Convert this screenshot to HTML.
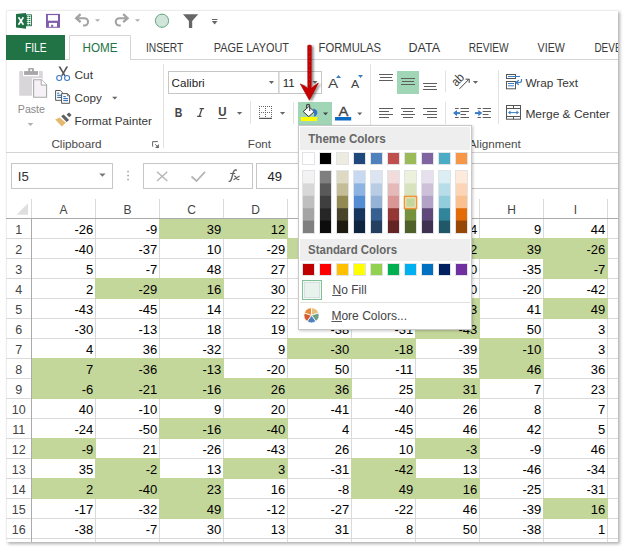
<!DOCTYPE html>
<html><head><meta charset="utf-8"><style>
html,body{margin:0;padding:0;background:#fff;}
body{width:629px;height:556px;position:relative;overflow:hidden;}
#frame{position:absolute;left:6px;top:10px;width:612px;height:532px;background:#fff;box-shadow:2px 2px 3px rgba(0,0,0,0.3);}
svg{position:absolute;left:0;top:0;}
text{font-family:"Liberation Sans",sans-serif;}
</style></head><body>
<div id="frame"></div>
<svg width="629" height="556" viewBox="0 0 629 556">
<defs>
<clipPath id="fc"><rect x="6" y="10" width="612" height="532"/></clipPath>
<filter id="psh" x="-10%" y="-10%" width="130%" height="130%"><feGaussianBlur in="SourceAlpha" stdDeviation="1.6"/><feOffset dx="0.5" dy="1"/><feComponentTransfer><feFuncA type="linear" slope="0.22"/></feComponentTransfer><feMerge><feMergeNode/><feMergeNode in="SourceGraphic"/></feMerge></filter>
<filter id="ash" x="-50%" y="-10%" width="200%" height="130%"><feGaussianBlur in="SourceAlpha" stdDeviation="1.2"/><feOffset dx="1.5" dy="1"/><feComponentTransfer><feFuncA type="linear" slope="0.45"/></feComponentTransfer><feMerge><feMergeNode/><feMergeNode in="SourceGraphic"/></feMerge></filter>
</defs>
<g clip-path="url(#fc)">
<line x1="6" y1="10.5" x2="618" y2="10.5" stroke="#ededed" stroke-width="1"/>
<line x1="6.5" y1="10" x2="6.5" y2="542" stroke="#ededed" stroke-width="1"/>
<path d="M16 14L26 12.9V28.7L16 27.5Z" fill="#1e7145"/>
<rect x="26" y="14.4" width="5.9" height="11.8" fill="#1e7145"/>
<rect x="26.9" y="15.3" width="4.1" height="10" fill="#fff"/>
<line x1="26.4" y1="16.6" x2="27.7" y2="16.6" stroke="#1e7145" stroke-width="1.1"/>
<line x1="28.6" y1="16.6" x2="30.4" y2="16.6" stroke="#1e7145" stroke-width="1.2"/>
<line x1="26.4" y1="18.6" x2="27.7" y2="18.6" stroke="#1e7145" stroke-width="1.1"/>
<line x1="28.6" y1="18.6" x2="30.4" y2="18.6" stroke="#1e7145" stroke-width="1.2"/>
<line x1="26.4" y1="20.6" x2="27.7" y2="20.6" stroke="#1e7145" stroke-width="1.1"/>
<line x1="28.6" y1="20.6" x2="30.4" y2="20.6" stroke="#1e7145" stroke-width="1.2"/>
<line x1="26.4" y1="22.6" x2="27.7" y2="22.6" stroke="#1e7145" stroke-width="1.1"/>
<line x1="28.6" y1="22.6" x2="30.4" y2="22.6" stroke="#1e7145" stroke-width="1.2"/>
<line x1="26.4" y1="24.6" x2="27.7" y2="24.6" stroke="#1e7145" stroke-width="1.1"/>
<line x1="28.6" y1="24.6" x2="30.4" y2="24.6" stroke="#1e7145" stroke-width="1.2"/>
<path d="M18.5 17.3L23.4 24.7M23.4 17.3L18.5 24.7" fill="none" stroke="#fff" stroke-width="1.6"/>
<rect x="46" y="13.9" width="14" height="13.9" fill="#7f5bab"/>
<rect x="47.9" y="15.1" width="10.1" height="5.6" fill="#fff"/>
<rect x="48.9" y="22.9" width="8.1" height="3.9" fill="#fff"/>
<rect x="51.1" y="24.8" width="2.1" height="2" fill="#7f5bab"/>
<path d="M76.5 18.2H84.4A3.65 3.65 0 0 1 84.4 25.5H83" fill="none" stroke="#a3a3a3" stroke-width="2.1"/>
<path d="M80.6 14.2L76.2 18.2L80.6 22.2" fill="none" stroke="#a3a3a3" stroke-width="2.3"/>
<path d="M95 19.3H100L97.5 21.8Z" fill="#a8a8a8"/>
<path d="M127.3 18.2H119.4A3.65 3.65 0 0 0 119.4 25.5H120.8" fill="none" stroke="#a3a3a3" stroke-width="2.1"/>
<path d="M123.2 14.2L127.6 18.2L123.2 22.2" fill="none" stroke="#a3a3a3" stroke-width="2.3"/>
<path d="M135 19.3H140L137.5 21.8Z" fill="#a8a8a8"/>
<circle cx="162" cy="20.7" r="6.6" fill="#d2e5da" stroke="#5ea882" stroke-width="1"/>
<path d="M183 14.2H198.2L192.2 21V28.1H188.9V21Z" fill="#666"/>
<line x1="211.8" y1="19.5" x2="217.5" y2="19.5" stroke="#666" stroke-width="1"/>
<path d="M211.8 21H217.5L214.65 24.5Z" fill="#666"/>
<rect x="6" y="35" width="59" height="25" fill="#217346"/>
<line x1="65" y1="59.5" x2="69" y2="59.5" stroke="#d4d4d4" stroke-width="1"/>
<line x1="130" y1="59.5" x2="618" y2="59.5" stroke="#d4d4d4" stroke-width="1"/>
<path d="M69.5 60V35.5H130.5V60" fill="none" stroke="#d4d4d4" stroke-width="1"/>
<text x="24.9" y="52" font-size="12.5" fill="#fff" textLength="21.6" lengthAdjust="spacingAndGlyphs">FILE</text>
<text x="82.5" y="52" font-size="12.5" fill="#217346" textLength="34.9" lengthAdjust="spacingAndGlyphs">HOME</text>
<text x="145.9" y="52" font-size="12.5" fill="#3a3a3a" textLength="37.4" lengthAdjust="spacingAndGlyphs">INSERT</text>
<text x="213.8" y="52" font-size="12.5" fill="#3a3a3a" textLength="75.1" lengthAdjust="spacingAndGlyphs">PAGE LAYOUT</text>
<text x="318.6" y="52" font-size="12.5" fill="#3a3a3a" textLength="62.5" lengthAdjust="spacingAndGlyphs">FORMULAS</text>
<text x="408.5" y="52" font-size="12.5" fill="#3a3a3a" textLength="31.6" lengthAdjust="spacingAndGlyphs">DATA</text>
<text x="468.7" y="52" font-size="12.5" fill="#3a3a3a" textLength="40" lengthAdjust="spacingAndGlyphs">REVIEW</text>
<text x="537.6" y="52" font-size="12.5" fill="#3a3a3a" textLength="27.2" lengthAdjust="spacingAndGlyphs">VIEW</text>
<text x="594.4" y="52" font-size="12.5" fill="#3a3a3a" textLength="61" lengthAdjust="spacingAndGlyphs">DEVELOPER</text>
<line x1="6" y1="152.5" x2="618" y2="152.5" stroke="#d4d4d4" stroke-width="1"/>
<line x1="163.5" y1="64" x2="163.5" y2="148" stroke="#e1e1e1" stroke-width="1"/>
<line x1="370.5" y1="64" x2="370.5" y2="148" stroke="#e1e1e1" stroke-width="1"/>
<rect x="19.2" y="71.1" width="23.6" height="24.6" fill="#d9d6da" rx="0.8"/>
<rect x="23" y="70" width="16" height="6.2" fill="#fff"/>
<rect x="24.1" y="71.1" width="13.9" height="3.8" fill="#a7a7a7"/>
<rect x="28.2" y="68" width="5.7" height="4" fill="#a7a7a7" rx="1"/>
<rect x="30.1" y="69.4" width="1.9" height="1.7" fill="#fff"/>
<path d="M32.1 78.2H41.6L48.1 84.7V98.7H32.1Z" fill="#fff"/>
<path d="M33.6 79.7H41.2L46.6 85.1V97.2H33.6Z" fill="#f6f1f7" stroke="#a9a9a9" stroke-width="1.1"/>
<path d="M41.2 79.7V85.1H46.6" fill="#fff" stroke="#a9a9a9" stroke-width="1"/>
<text x="17.8" y="112.6" font-size="11.6" fill="#8a8a8a" textLength="27.2" lengthAdjust="spacingAndGlyphs">Paste</text>
<path d="M27.6 123H33.3L30.45 126Z" fill="#b0b0b0"/>
<path d="M58.4 66.6L60.4 66.6L65.6 75.4L64.4 76.2Z M66.2 66.6L68.2 66.6L62.4 76.2L61.2 75.4Z" fill="#555"/>
<circle cx="59.2" cy="78" r="2.5" fill="none" stroke="#3d7bc8" stroke-width="1.1"/>
<circle cx="67.1" cy="78" r="2.5" fill="none" stroke="#3d7bc8" stroke-width="1.1"/>
<text x="74.5" y="78.7" font-size="11.6" fill="#363636" textLength="18.5" lengthAdjust="spacingAndGlyphs">Cut</text>
<path d="M55.6 90.5H60.3L62.3 92.5V100.3H55.6Z" fill="#fff" stroke="#555" stroke-width="1"/>
<line x1="57.2" y1="93.2" x2="59.2" y2="93.2" stroke="#2e6db8" stroke-width="1.1"/>
<line x1="57.2" y1="95.3" x2="61" y2="95.3" stroke="#2e6db8" stroke-width="1.1"/>
<line x1="57.2" y1="97.4" x2="61" y2="97.4" stroke="#2e6db8" stroke-width="1.1"/>
<path d="M61.6 93.6H67.4L69.6 95.8V103.3H61.6Z" fill="#fff" stroke="#555" stroke-width="1"/>
<path d="M67.4 93.6V95.8H69.6" fill="none" stroke="#555" stroke-width="0.8"/>
<line x1="63.3" y1="96.6" x2="65.8" y2="96.6" stroke="#2e6db8" stroke-width="1.1"/>
<line x1="63.3" y1="98.6" x2="68" y2="98.6" stroke="#2e6db8" stroke-width="1.1"/>
<line x1="63.3" y1="100.6" x2="68" y2="100.6" stroke="#2e6db8" stroke-width="1.1"/>
<text x="74.5" y="101.7" font-size="11.6" fill="#363636" textLength="27.3" lengthAdjust="spacingAndGlyphs">Copy</text>
<path d="M112.1 96.7H117.4L114.75 99.4Z" fill="#666"/>
<path d="M66.6 114.6L69 112.4L71.6 115L69.3 117.3Z" fill="#5f5f5f"/>
<path d="M61.2 116.3L63.6 114.4L69.1 119.9L66.6 122Z" fill="#5f5f5f"/>
<path d="M55.2 119.5L59.6 117.6L65.9 122.8L61.8 126.5Z" fill="#e6b86f"/>
<text x="74.5" y="124.8" font-size="11.6" fill="#363636" textLength="77.4" lengthAdjust="spacingAndGlyphs">Format Painter</text>
<text x="51.4" y="148.2" font-size="11.6" fill="#4a4a4a" textLength="50.2" lengthAdjust="spacingAndGlyphs">Clipboard</text>
<path d="M152.6 146.6V141.6H157.9" fill="none" stroke="#666" stroke-width="1"/>
<path d="M158.9 144.1V147.9H155.1Z" fill="#666"/>
<path d="M155.2 144.3L157.6 146.7" fill="none" stroke="#666" stroke-width="1"/>
<rect x="168.5" y="71.5" width="110.5" height="22" fill="#fff" stroke="#c6c6c6" stroke-width="1"/>
<rect x="279" y="71.5" width="42.5" height="22" fill="#fff" stroke="#c6c6c6" stroke-width="1"/>
<text x="171.6" y="86.6" font-size="11.6" fill="#222" textLength="33" lengthAdjust="spacingAndGlyphs">Calibri</text>
<path d="M268.9 80.9H274L271.45 84.1Z" fill="#666"/>
<text x="282.8" y="86.6" font-size="11.6" fill="#222" textLength="12" lengthAdjust="spacingAndGlyphs">11</text>
<path d="M312.5 81H317.5L315.0 84Z" fill="#666"/>
<text x="328" y="87.6" font-size="13" fill="#444" textLength="10.2" lengthAdjust="spacingAndGlyphs">A</text>
<path d="M336 77.9H341.1L338.55 75Z" fill="#3b7dc4"/>
<text x="351.1" y="87.6" font-size="10.8" fill="#444" textLength="8.2" lengthAdjust="spacingAndGlyphs">A</text>
<path d="M358 75H363L360.5 78Z" fill="#3b7dc4"/>
<text x="174.8" y="117" font-size="12.3" fill="#444" textLength="7.6" lengthAdjust="spacingAndGlyphs" font-weight="bold">B</text>
<path d="M199.6 108.7H204.1M201.9 108.7L199.3 116.4M197.1 116.4H201.5" fill="none" stroke="#4a4a4a" stroke-width="1.3"/>
<text x="218.3" y="116.4" font-size="12" fill="#444" textLength="8.3" lengthAdjust="spacingAndGlyphs" font-weight="bold">U</text>
<line x1="218.3" y1="118.5" x2="226.7" y2="118.5" stroke="#555" stroke-width="1"/>
<path d="M236.9 112H242.2L239.55 114.8Z" fill="#666"/>
<line x1="250.5" y1="101" x2="250.5" y2="123.5" stroke="#e1e1e1" stroke-width="1"/>
<rect x="259" y="106" width="1" height="1" fill="#666"/>
<rect x="259" y="112" width="1" height="1" fill="#666"/>
<rect x="261" y="106" width="1" height="1" fill="#666"/>
<rect x="261" y="112" width="1" height="1" fill="#666"/>
<rect x="263" y="106" width="1" height="1" fill="#666"/>
<rect x="263" y="112" width="1" height="1" fill="#666"/>
<rect x="265" y="106" width="1" height="1" fill="#666"/>
<rect x="265" y="112" width="1" height="1" fill="#666"/>
<rect x="267" y="106" width="1" height="1" fill="#666"/>
<rect x="267" y="112" width="1" height="1" fill="#666"/>
<rect x="269" y="106" width="1" height="1" fill="#666"/>
<rect x="269" y="112" width="1" height="1" fill="#666"/>
<rect x="271" y="106" width="1" height="1" fill="#666"/>
<rect x="271" y="112" width="1" height="1" fill="#666"/>
<rect x="259" y="108" width="1" height="1" fill="#666"/>
<rect x="259" y="110" width="1" height="1" fill="#666"/>
<rect x="259" y="114" width="1" height="1" fill="#666"/>
<rect x="259" y="116" width="1" height="1" fill="#666"/>
<rect x="265" y="108" width="1" height="1" fill="#666"/>
<rect x="265" y="110" width="1" height="1" fill="#666"/>
<rect x="265" y="114" width="1" height="1" fill="#666"/>
<rect x="265" y="116" width="1" height="1" fill="#666"/>
<rect x="271" y="108" width="1" height="1" fill="#666"/>
<rect x="271" y="110" width="1" height="1" fill="#666"/>
<rect x="271" y="114" width="1" height="1" fill="#666"/>
<rect x="271" y="116" width="1" height="1" fill="#666"/>
<rect x="259" y="117.8" width="13" height="1.2" fill="#555"/>
<path d="M279.9 112H285.2L282.54999999999995 114.8Z" fill="#666"/>
<line x1="293.5" y1="102" x2="293.5" y2="124" stroke="#e1e1e1" stroke-width="1"/>
<rect x="298" y="102" width="34" height="23" fill="#a0d5b6"/>
<path d="M303.2 111.6L308.75 106.6L314.3 111.6L308.75 116.6Z" fill="#fff" stroke="#333" stroke-width="1"/>
<path d="M306.5 108.5V106A1.6 1.6 0 0 1 309.7 106V111" fill="none" stroke="#444" stroke-width="1.1"/>
<path d="M313.2 108.6Q318 109.6 317.2 113.8Q316.5 116.4 313.8 116.8Q315 113.2 313 111.4Z" fill="#3b74c6"/>
<rect x="300.8" y="117" width="16.3" height="4" fill="#ffff00"/>
<path d="M323 112.6H328.1L325.55 115.2Z" fill="#444"/>
<text x="338.4" y="116.3" font-size="12.8" fill="#444" textLength="9.9" lengthAdjust="spacingAndGlyphs" stroke="#444" stroke-width="0.35">A</text>
<rect x="335" y="117" width="16.2" height="3.5" fill="#0a6ac4"/>
<path d="M357.2 112.6H362.3L359.75 115.2Z" fill="#666"/>
<text x="247.8" y="148" font-size="11.6" fill="#4a4a4a" textLength="23.2" lengthAdjust="spacingAndGlyphs">Font</text>
<line x1="379" y1="74.5" x2="393" y2="74.5" stroke="#5e5e5e" stroke-width="1"/>
<line x1="380" y1="77.5" x2="392" y2="77.5" stroke="#5e5e5e" stroke-width="1"/>
<line x1="379" y1="80.5" x2="393" y2="80.5" stroke="#5e5e5e" stroke-width="1"/>
<rect x="397" y="71" width="22" height="23" fill="#a0d5b6"/>
<line x1="401" y1="78.5" x2="415" y2="78.5" stroke="#5e5e5e" stroke-width="1"/>
<line x1="402" y1="81.5" x2="414" y2="81.5" stroke="#5e5e5e" stroke-width="1"/>
<line x1="401" y1="84.5" x2="415" y2="84.5" stroke="#5e5e5e" stroke-width="1"/>
<line x1="423" y1="83.5" x2="437" y2="83.5" stroke="#5e5e5e" stroke-width="1"/>
<line x1="424" y1="86.5" x2="436" y2="86.5" stroke="#5e5e5e" stroke-width="1"/>
<line x1="423" y1="89.5" x2="437" y2="89.5" stroke="#5e5e5e" stroke-width="1"/>
<line x1="445.5" y1="70.7" x2="445.5" y2="92.5" stroke="#e1e1e1" stroke-width="1"/>
<text x="451.8" y="83.6" font-size="12.5" fill="#3a3a3a" textLength="12.5" lengthAdjust="spacingAndGlyphs" transform="rotate(-45 458 80)">ab</text>
<path d="M459.5 88.8L469 79.2" fill="none" stroke="#444" stroke-width="1"/>
<path d="M465.5 79.2H469.2V82.9" fill="none" stroke="#444" stroke-width="1"/>
<path d="M472.8 80.9H478.2L475.5 83.8Z" fill="#666"/>
<line x1="379" y1="108.5" x2="393" y2="108.5" stroke="#5e5e5e" stroke-width="1"/>
<line x1="379" y1="111.5" x2="389" y2="111.5" stroke="#5e5e5e" stroke-width="1"/>
<line x1="379" y1="114.5" x2="393" y2="114.5" stroke="#5e5e5e" stroke-width="1"/>
<line x1="379" y1="117.5" x2="389" y2="117.5" stroke="#5e5e5e" stroke-width="1"/>
<line x1="401" y1="108.5" x2="415" y2="108.5" stroke="#5e5e5e" stroke-width="1"/>
<line x1="403" y1="111.5" x2="413" y2="111.5" stroke="#5e5e5e" stroke-width="1"/>
<line x1="401" y1="114.5" x2="415" y2="114.5" stroke="#5e5e5e" stroke-width="1"/>
<line x1="403" y1="117.5" x2="413" y2="117.5" stroke="#5e5e5e" stroke-width="1"/>
<line x1="423" y1="108.5" x2="437" y2="108.5" stroke="#5e5e5e" stroke-width="1"/>
<line x1="427" y1="111.5" x2="437" y2="111.5" stroke="#5e5e5e" stroke-width="1"/>
<line x1="423" y1="114.5" x2="437" y2="114.5" stroke="#5e5e5e" stroke-width="1"/>
<line x1="427" y1="117.5" x2="437" y2="117.5" stroke="#5e5e5e" stroke-width="1"/>
<line x1="445.5" y1="101.8" x2="445.5" y2="124.4" stroke="#e1e1e1" stroke-width="1"/>
<line x1="455" y1="108.5" x2="458.7" y2="108.5" stroke="#5e5e5e" stroke-width="1"/>
<line x1="460.5" y1="108.5" x2="469" y2="108.5" stroke="#5e5e5e" stroke-width="1"/>
<line x1="460.5" y1="111.5" x2="469" y2="111.5" stroke="#5e5e5e" stroke-width="1"/>
<line x1="460.5" y1="114.5" x2="466" y2="114.5" stroke="#5e5e5e" stroke-width="1"/>
<line x1="455" y1="117.5" x2="458.7" y2="117.5" stroke="#5e5e5e" stroke-width="1"/>
<line x1="460.5" y1="117.5" x2="469" y2="117.5" stroke="#5e5e5e" stroke-width="1"/>
<path d="M453 113.1L457 110V116.2Z" fill="#3b7dc4"/>
<path d="M456 113.1H460.2" fill="none" stroke="#3b7dc4" stroke-width="2"/>
<line x1="477.5" y1="108.5" x2="481" y2="108.5" stroke="#5e5e5e" stroke-width="1"/>
<line x1="482.7" y1="108.5" x2="491" y2="108.5" stroke="#5e5e5e" stroke-width="1"/>
<line x1="482.7" y1="111.5" x2="491" y2="111.5" stroke="#5e5e5e" stroke-width="1"/>
<line x1="482.7" y1="114.5" x2="488.5" y2="114.5" stroke="#5e5e5e" stroke-width="1"/>
<line x1="477.5" y1="117.5" x2="481" y2="117.5" stroke="#5e5e5e" stroke-width="1"/>
<line x1="482.7" y1="117.5" x2="491" y2="117.5" stroke="#5e5e5e" stroke-width="1"/>
<path d="M482.3 113.1L478.3 110V116.2Z" fill="#3b7dc4"/>
<path d="M474.9 113.1H479.3" fill="none" stroke="#3b7dc4" stroke-width="2"/>
<line x1="498.5" y1="70" x2="498.5" y2="124" stroke="#e1e1e1" stroke-width="1"/>
<rect x="506.5" y="74.5" width="9" height="4" fill="#fff" stroke="#555" stroke-width="1"/>
<line x1="508" y1="76.5" x2="520" y2="76.5" stroke="#3b7dc4" stroke-width="1"/>
<rect x="506.5" y="81.5" width="9" height="7.3" fill="#fff" stroke="#555" stroke-width="1"/>
<line x1="508" y1="83.5" x2="514" y2="83.5" stroke="#3b7dc4" stroke-width="1"/>
<line x1="508" y1="85.8" x2="514" y2="85.8" stroke="#3b7dc4" stroke-width="1"/>
<path d="M521.5 79V80.4Q521.5 82.5 519 82.5H516.2" fill="none" stroke="#3b7dc4" stroke-width="1.2"/>
<path d="M518.8 80.2L516 82.5L518.8 84.7" fill="none" stroke="#3b7dc4" stroke-width="1.3"/>
<text x="525.4" y="87" font-size="11.6" fill="#363636" textLength="52.6" lengthAdjust="spacingAndGlyphs">Wrap Text</text>
<rect x="506.5" y="105.5" width="14" height="13.7" fill="#fff" stroke="#555" stroke-width="1"/>
<line x1="506.5" y1="108.5" x2="520.5" y2="108.5" stroke="#555" stroke-width="1"/>
<line x1="506.5" y1="116.5" x2="520.5" y2="116.5" stroke="#555" stroke-width="1"/>
<line x1="513.5" y1="105.5" x2="513.5" y2="108.5" stroke="#555" stroke-width="1"/>
<line x1="513.5" y1="116.5" x2="513.5" y2="119.2" stroke="#555" stroke-width="1"/>
<path d="M509.5 112.6H517.5" fill="none" stroke="#3b7dc4" stroke-width="1"/>
<path d="M508 112.6L510.5 110.6V114.6Z M519 112.6L516.5 110.6V114.6Z" fill="#3b7dc4"/>
<text x="525.4" y="117.9" font-size="11.6" fill="#363636" textLength="84.4" lengthAdjust="spacingAndGlyphs">Merge &amp; Center</text>
<text x="468.8" y="148" font-size="11.6" fill="#4a4a4a" textLength="52" lengthAdjust="spacingAndGlyphs">Alignment</text>
<rect x="11.5" y="163.5" width="101" height="25" fill="#fff" stroke="#c6c6c6" stroke-width="1"/>
<text x="17.8" y="180.6" font-size="12.5" fill="#333" textLength="11" lengthAdjust="spacingAndGlyphs">I5</text>
<path d="M99.2 173.5H105.6L102.4 176.8Z" fill="#777"/>
<rect x="127.3" y="170.8" width="1.5" height="1.5" fill="#999"/>
<rect x="127.3" y="174.8" width="1.5" height="1.5" fill="#999"/>
<rect x="127.3" y="178.8" width="1.5" height="1.5" fill="#999"/>
<rect x="143.5" y="163.5" width="109" height="25" fill="#fff" stroke="#c6c6c6" stroke-width="1"/>
<path d="M157 171.8L167.3 181M167.3 171.8L157 181" fill="none" stroke="#b5b5b5" stroke-width="1.4"/>
<path d="M191.5 176.5L196.5 181L205 171.8" fill="none" stroke="#b5b5b5" stroke-width="1.8"/>
<path d="M228.6 181.2Q230.6 182 231.6 178.5L233.4 172Q234.3 169.6 236.9 170.2" fill="none" stroke="#666" stroke-width="1.4"/>
<path d="M230.2 173.5H235.3" fill="none" stroke="#666" stroke-width="1.1"/>
<path d="M234 176.2Q235.3 175.6 236 177.3L236.8 179Q237.6 180 239.3 179.3M239.6 176L233.5 179.8" fill="none" stroke="#666" stroke-width="1.2"/>
<rect x="256.5" y="163.5" width="362" height="25" fill="#fff" stroke="#c6c6c6" stroke-width="1"/>
<text x="267.5" y="181" font-size="12.5" fill="#222" textLength="14.5" lengthAdjust="spacingAndGlyphs">49</text>
<line x1="6" y1="238.5" x2="618" y2="238.5" stroke="#dadada" stroke-width="1"/>
<line x1="6" y1="258.5" x2="618" y2="258.5" stroke="#dadada" stroke-width="1"/>
<line x1="6" y1="278.5" x2="618" y2="278.5" stroke="#dadada" stroke-width="1"/>
<line x1="6" y1="298.5" x2="618" y2="298.5" stroke="#dadada" stroke-width="1"/>
<line x1="6" y1="318.5" x2="618" y2="318.5" stroke="#dadada" stroke-width="1"/>
<line x1="6" y1="338.5" x2="618" y2="338.5" stroke="#dadada" stroke-width="1"/>
<line x1="6" y1="358.5" x2="618" y2="358.5" stroke="#dadada" stroke-width="1"/>
<line x1="6" y1="378.5" x2="618" y2="378.5" stroke="#dadada" stroke-width="1"/>
<line x1="6" y1="398.5" x2="618" y2="398.5" stroke="#dadada" stroke-width="1"/>
<line x1="6" y1="418.5" x2="618" y2="418.5" stroke="#dadada" stroke-width="1"/>
<line x1="6" y1="438.5" x2="618" y2="438.5" stroke="#dadada" stroke-width="1"/>
<line x1="6" y1="458.5" x2="618" y2="458.5" stroke="#dadada" stroke-width="1"/>
<line x1="6" y1="478.5" x2="618" y2="478.5" stroke="#dadada" stroke-width="1"/>
<line x1="6" y1="498.5" x2="618" y2="498.5" stroke="#dadada" stroke-width="1"/>
<line x1="6" y1="518.5" x2="618" y2="518.5" stroke="#dadada" stroke-width="1"/>
<line x1="6" y1="538.5" x2="618" y2="538.5" stroke="#dadada" stroke-width="1"/>
<line x1="6" y1="558.5" x2="618" y2="558.5" stroke="#dadada" stroke-width="1"/>
<line x1="95.5" y1="199" x2="95.5" y2="542" stroke="#dadada" stroke-width="1"/>
<line x1="159.5" y1="199" x2="159.5" y2="542" stroke="#dadada" stroke-width="1"/>
<line x1="223.5" y1="199" x2="223.5" y2="542" stroke="#dadada" stroke-width="1"/>
<line x1="287.5" y1="199" x2="287.5" y2="542" stroke="#dadada" stroke-width="1"/>
<line x1="351.5" y1="199" x2="351.5" y2="542" stroke="#dadada" stroke-width="1"/>
<line x1="415.5" y1="199" x2="415.5" y2="542" stroke="#dadada" stroke-width="1"/>
<line x1="479.5" y1="199" x2="479.5" y2="542" stroke="#dadada" stroke-width="1"/>
<line x1="543.5" y1="199" x2="543.5" y2="542" stroke="#dadada" stroke-width="1"/>
<line x1="607.5" y1="199" x2="607.5" y2="542" stroke="#dadada" stroke-width="1"/>
<rect x="159" y="218" width="65" height="21" fill="#c4d79b"/>
<rect x="223" y="218" width="65" height="21" fill="#c4d79b"/>
<rect x="287" y="238" width="65" height="21" fill="#c4d79b"/>
<rect x="415" y="238" width="65" height="21" fill="#c4d79b"/>
<rect x="479" y="238" width="65" height="21" fill="#c4d79b"/>
<rect x="543" y="238" width="65" height="21" fill="#c4d79b"/>
<rect x="543" y="258" width="65" height="21" fill="#c4d79b"/>
<rect x="95" y="278" width="65" height="21" fill="#c4d79b"/>
<rect x="159" y="278" width="65" height="21" fill="#c4d79b"/>
<rect x="415" y="298" width="65" height="21" fill="#c4d79b"/>
<rect x="543" y="298" width="65" height="21" fill="#c4d79b"/>
<rect x="415" y="318" width="65" height="21" fill="#c4d79b"/>
<rect x="287" y="338" width="65" height="21" fill="#c4d79b"/>
<rect x="351" y="338" width="65" height="21" fill="#c4d79b"/>
<rect x="479" y="338" width="65" height="21" fill="#c4d79b"/>
<rect x="32" y="358" width="64" height="21" fill="#c4d79b"/>
<rect x="95" y="358" width="65" height="21" fill="#c4d79b"/>
<rect x="159" y="358" width="65" height="21" fill="#c4d79b"/>
<rect x="479" y="358" width="65" height="21" fill="#c4d79b"/>
<rect x="32" y="378" width="64" height="21" fill="#c4d79b"/>
<rect x="95" y="378" width="65" height="21" fill="#c4d79b"/>
<rect x="159" y="378" width="65" height="21" fill="#c4d79b"/>
<rect x="223" y="378" width="65" height="21" fill="#c4d79b"/>
<rect x="287" y="378" width="65" height="21" fill="#c4d79b"/>
<rect x="415" y="378" width="65" height="21" fill="#c4d79b"/>
<rect x="159" y="418" width="65" height="21" fill="#c4d79b"/>
<rect x="223" y="418" width="65" height="21" fill="#c4d79b"/>
<rect x="32" y="438" width="64" height="21" fill="#c4d79b"/>
<rect x="415" y="438" width="65" height="21" fill="#c4d79b"/>
<rect x="95" y="458" width="65" height="21" fill="#c4d79b"/>
<rect x="223" y="458" width="65" height="21" fill="#c4d79b"/>
<rect x="351" y="458" width="65" height="21" fill="#c4d79b"/>
<rect x="32" y="478" width="64" height="21" fill="#c4d79b"/>
<rect x="95" y="478" width="65" height="21" fill="#c4d79b"/>
<rect x="159" y="478" width="65" height="21" fill="#c4d79b"/>
<rect x="351" y="478" width="65" height="21" fill="#c4d79b"/>
<rect x="415" y="478" width="65" height="21" fill="#c4d79b"/>
<rect x="159" y="498" width="65" height="21" fill="#c4d79b"/>
<rect x="543" y="498" width="65" height="21" fill="#c4d79b"/>
<line x1="6" y1="218.5" x2="618" y2="218.5" stroke="#ababab" stroke-width="1"/>
<line x1="31.5" y1="199" x2="31.5" y2="218" stroke="#dadada" stroke-width="1"/>
<line x1="31.5" y1="218" x2="31.5" y2="542" stroke="#ababab" stroke-width="1"/>
<path d="M28 203.3V214.7H16.5Z" fill="#dfdfdf"/>
<text x="63.5" y="214.1" font-size="12" fill="#444" text-anchor="middle">A</text>
<text x="127.5" y="214.1" font-size="12" fill="#444" text-anchor="middle">B</text>
<text x="191.5" y="214.1" font-size="12" fill="#444" text-anchor="middle">C</text>
<text x="255.5" y="214.1" font-size="12" fill="#444" text-anchor="middle">D</text>
<text x="319.5" y="214.1" font-size="12" fill="#444" text-anchor="middle">E</text>
<text x="383.5" y="214.1" font-size="12" fill="#444" text-anchor="middle">F</text>
<text x="447.5" y="214.1" font-size="12" fill="#444" text-anchor="middle">G</text>
<text x="511.5" y="214.1" font-size="12" fill="#444" text-anchor="middle">H</text>
<text x="575.5" y="214.1" font-size="12" fill="#444" text-anchor="middle">I</text>
<text x="18.8" y="233.8" font-size="12.5" fill="#444" text-anchor="middle">1</text>
<text x="93.2" y="234" font-size="13" fill="#000" text-anchor="end">-26</text>
<text x="157.2" y="234" font-size="13" fill="#000" text-anchor="end">-9</text>
<text x="221.2" y="234" font-size="13" fill="#000" text-anchor="end">39</text>
<text x="285.2" y="234" font-size="13" fill="#000" text-anchor="end">12</text>
<text x="477.2" y="234" font-size="13" fill="#000" text-anchor="end">4</text>
<text x="541.2" y="234" font-size="13" fill="#000" text-anchor="end">9</text>
<text x="605.2" y="234" font-size="13" fill="#000" text-anchor="end">44</text>
<text x="18.8" y="253.8" font-size="12.5" fill="#444" text-anchor="middle">2</text>
<text x="93.2" y="254" font-size="13" fill="#000" text-anchor="end">-40</text>
<text x="157.2" y="254" font-size="13" fill="#000" text-anchor="end">-37</text>
<text x="221.2" y="254" font-size="13" fill="#000" text-anchor="end">10</text>
<text x="285.2" y="254" font-size="13" fill="#000" text-anchor="end">-29</text>
<text x="477.2" y="254" font-size="13" fill="#000" text-anchor="end">2</text>
<text x="541.2" y="254" font-size="13" fill="#000" text-anchor="end">39</text>
<text x="605.2" y="254" font-size="13" fill="#000" text-anchor="end">-26</text>
<text x="18.8" y="273.8" font-size="12.5" fill="#444" text-anchor="middle">3</text>
<text x="93.2" y="274" font-size="13" fill="#000" text-anchor="end">5</text>
<text x="157.2" y="274" font-size="13" fill="#000" text-anchor="end">-7</text>
<text x="221.2" y="274" font-size="13" fill="#000" text-anchor="end">48</text>
<text x="285.2" y="274" font-size="13" fill="#000" text-anchor="end">27</text>
<text x="477.2" y="274" font-size="13" fill="#000" text-anchor="end">0</text>
<text x="541.2" y="274" font-size="13" fill="#000" text-anchor="end">-35</text>
<text x="605.2" y="274" font-size="13" fill="#000" text-anchor="end">-7</text>
<text x="18.8" y="293.8" font-size="12.5" fill="#444" text-anchor="middle">4</text>
<text x="93.2" y="294" font-size="13" fill="#000" text-anchor="end">2</text>
<text x="157.2" y="294" font-size="13" fill="#000" text-anchor="end">-29</text>
<text x="221.2" y="294" font-size="13" fill="#000" text-anchor="end">16</text>
<text x="285.2" y="294" font-size="13" fill="#000" text-anchor="end">30</text>
<text x="477.2" y="294" font-size="13" fill="#000" text-anchor="end">0</text>
<text x="541.2" y="294" font-size="13" fill="#000" text-anchor="end">-20</text>
<text x="605.2" y="294" font-size="13" fill="#000" text-anchor="end">-42</text>
<text x="18.8" y="313.8" font-size="12.5" fill="#444" text-anchor="middle">5</text>
<text x="93.2" y="314" font-size="13" fill="#000" text-anchor="end">-43</text>
<text x="157.2" y="314" font-size="13" fill="#000" text-anchor="end">-45</text>
<text x="221.2" y="314" font-size="13" fill="#000" text-anchor="end">14</text>
<text x="285.2" y="314" font-size="13" fill="#000" text-anchor="end">22</text>
<text x="477.2" y="314" font-size="13" fill="#000" text-anchor="end">3</text>
<text x="541.2" y="314" font-size="13" fill="#000" text-anchor="end">41</text>
<text x="605.2" y="314" font-size="13" fill="#000" text-anchor="end">49</text>
<text x="18.8" y="333.8" font-size="12.5" fill="#444" text-anchor="middle">6</text>
<text x="93.2" y="334" font-size="13" fill="#000" text-anchor="end">-30</text>
<text x="157.2" y="334" font-size="13" fill="#000" text-anchor="end">-13</text>
<text x="221.2" y="334" font-size="13" fill="#000" text-anchor="end">18</text>
<text x="285.2" y="334" font-size="13" fill="#000" text-anchor="end">19</text>
<text x="349.2" y="334" font-size="13" fill="#000" text-anchor="end">-38</text>
<text x="413.2" y="334" font-size="13" fill="#000" text-anchor="end">-31</text>
<text x="477.2" y="334" font-size="13" fill="#000" text-anchor="end">-43</text>
<text x="541.2" y="334" font-size="13" fill="#000" text-anchor="end">50</text>
<text x="605.2" y="334" font-size="13" fill="#000" text-anchor="end">3</text>
<text x="18.8" y="353.8" font-size="12.5" fill="#444" text-anchor="middle">7</text>
<text x="93.2" y="354" font-size="13" fill="#000" text-anchor="end">4</text>
<text x="157.2" y="354" font-size="13" fill="#000" text-anchor="end">36</text>
<text x="221.2" y="354" font-size="13" fill="#000" text-anchor="end">-32</text>
<text x="285.2" y="354" font-size="13" fill="#000" text-anchor="end">9</text>
<text x="349.2" y="354" font-size="13" fill="#000" text-anchor="end">-30</text>
<text x="413.2" y="354" font-size="13" fill="#000" text-anchor="end">-18</text>
<text x="477.2" y="354" font-size="13" fill="#000" text-anchor="end">-39</text>
<text x="541.2" y="354" font-size="13" fill="#000" text-anchor="end">-10</text>
<text x="605.2" y="354" font-size="13" fill="#000" text-anchor="end">3</text>
<text x="18.8" y="373.8" font-size="12.5" fill="#444" text-anchor="middle">8</text>
<text x="93.2" y="374" font-size="13" fill="#000" text-anchor="end">7</text>
<text x="157.2" y="374" font-size="13" fill="#000" text-anchor="end">-36</text>
<text x="221.2" y="374" font-size="13" fill="#000" text-anchor="end">-13</text>
<text x="285.2" y="374" font-size="13" fill="#000" text-anchor="end">-20</text>
<text x="349.2" y="374" font-size="13" fill="#000" text-anchor="end">50</text>
<text x="413.2" y="374" font-size="13" fill="#000" text-anchor="end">-11</text>
<text x="477.2" y="374" font-size="13" fill="#000" text-anchor="end">35</text>
<text x="541.2" y="374" font-size="13" fill="#000" text-anchor="end">46</text>
<text x="605.2" y="374" font-size="13" fill="#000" text-anchor="end">36</text>
<text x="18.8" y="393.8" font-size="12.5" fill="#444" text-anchor="middle">9</text>
<text x="93.2" y="394" font-size="13" fill="#000" text-anchor="end">-6</text>
<text x="157.2" y="394" font-size="13" fill="#000" text-anchor="end">-21</text>
<text x="221.2" y="394" font-size="13" fill="#000" text-anchor="end">-16</text>
<text x="285.2" y="394" font-size="13" fill="#000" text-anchor="end">26</text>
<text x="349.2" y="394" font-size="13" fill="#000" text-anchor="end">36</text>
<text x="413.2" y="394" font-size="13" fill="#000" text-anchor="end">25</text>
<text x="477.2" y="394" font-size="13" fill="#000" text-anchor="end">31</text>
<text x="541.2" y="394" font-size="13" fill="#000" text-anchor="end">7</text>
<text x="605.2" y="394" font-size="13" fill="#000" text-anchor="end">23</text>
<text x="18.8" y="413.8" font-size="12.5" fill="#444" text-anchor="middle">10</text>
<text x="93.2" y="414" font-size="13" fill="#000" text-anchor="end">40</text>
<text x="157.2" y="414" font-size="13" fill="#000" text-anchor="end">-10</text>
<text x="221.2" y="414" font-size="13" fill="#000" text-anchor="end">9</text>
<text x="285.2" y="414" font-size="13" fill="#000" text-anchor="end">20</text>
<text x="349.2" y="414" font-size="13" fill="#000" text-anchor="end">-41</text>
<text x="413.2" y="414" font-size="13" fill="#000" text-anchor="end">-40</text>
<text x="477.2" y="414" font-size="13" fill="#000" text-anchor="end">26</text>
<text x="541.2" y="414" font-size="13" fill="#000" text-anchor="end">8</text>
<text x="605.2" y="414" font-size="13" fill="#000" text-anchor="end">7</text>
<text x="18.8" y="433.8" font-size="12.5" fill="#444" text-anchor="middle">11</text>
<text x="93.2" y="434" font-size="13" fill="#000" text-anchor="end">-24</text>
<text x="157.2" y="434" font-size="13" fill="#000" text-anchor="end">-50</text>
<text x="221.2" y="434" font-size="13" fill="#000" text-anchor="end">-16</text>
<text x="285.2" y="434" font-size="13" fill="#000" text-anchor="end">-40</text>
<text x="349.2" y="434" font-size="13" fill="#000" text-anchor="end">4</text>
<text x="413.2" y="434" font-size="13" fill="#000" text-anchor="end">-45</text>
<text x="477.2" y="434" font-size="13" fill="#000" text-anchor="end">46</text>
<text x="541.2" y="434" font-size="13" fill="#000" text-anchor="end">42</text>
<text x="605.2" y="434" font-size="13" fill="#000" text-anchor="end">5</text>
<text x="18.8" y="453.8" font-size="12.5" fill="#444" text-anchor="middle">12</text>
<text x="93.2" y="454" font-size="13" fill="#000" text-anchor="end">-9</text>
<text x="157.2" y="454" font-size="13" fill="#000" text-anchor="end">21</text>
<text x="221.2" y="454" font-size="13" fill="#000" text-anchor="end">-26</text>
<text x="285.2" y="454" font-size="13" fill="#000" text-anchor="end">-43</text>
<text x="349.2" y="454" font-size="13" fill="#000" text-anchor="end">26</text>
<text x="413.2" y="454" font-size="13" fill="#000" text-anchor="end">10</text>
<text x="477.2" y="454" font-size="13" fill="#000" text-anchor="end">-3</text>
<text x="541.2" y="454" font-size="13" fill="#000" text-anchor="end">-9</text>
<text x="605.2" y="454" font-size="13" fill="#000" text-anchor="end">46</text>
<text x="18.8" y="473.8" font-size="12.5" fill="#444" text-anchor="middle">13</text>
<text x="93.2" y="474" font-size="13" fill="#000" text-anchor="end">35</text>
<text x="157.2" y="474" font-size="13" fill="#000" text-anchor="end">-2</text>
<text x="221.2" y="474" font-size="13" fill="#000" text-anchor="end">13</text>
<text x="285.2" y="474" font-size="13" fill="#000" text-anchor="end">3</text>
<text x="349.2" y="474" font-size="13" fill="#000" text-anchor="end">-31</text>
<text x="413.2" y="474" font-size="13" fill="#000" text-anchor="end">-42</text>
<text x="477.2" y="474" font-size="13" fill="#000" text-anchor="end">13</text>
<text x="541.2" y="474" font-size="13" fill="#000" text-anchor="end">-46</text>
<text x="605.2" y="474" font-size="13" fill="#000" text-anchor="end">-34</text>
<text x="18.8" y="493.8" font-size="12.5" fill="#444" text-anchor="middle">14</text>
<text x="93.2" y="494" font-size="13" fill="#000" text-anchor="end">2</text>
<text x="157.2" y="494" font-size="13" fill="#000" text-anchor="end">-40</text>
<text x="221.2" y="494" font-size="13" fill="#000" text-anchor="end">23</text>
<text x="285.2" y="494" font-size="13" fill="#000" text-anchor="end">16</text>
<text x="349.2" y="494" font-size="13" fill="#000" text-anchor="end">-8</text>
<text x="413.2" y="494" font-size="13" fill="#000" text-anchor="end">49</text>
<text x="477.2" y="494" font-size="13" fill="#000" text-anchor="end">16</text>
<text x="541.2" y="494" font-size="13" fill="#000" text-anchor="end">-25</text>
<text x="605.2" y="494" font-size="13" fill="#000" text-anchor="end">-31</text>
<text x="18.8" y="513.8" font-size="12.5" fill="#444" text-anchor="middle">15</text>
<text x="93.2" y="514" font-size="13" fill="#000" text-anchor="end">-17</text>
<text x="157.2" y="514" font-size="13" fill="#000" text-anchor="end">-32</text>
<text x="221.2" y="514" font-size="13" fill="#000" text-anchor="end">49</text>
<text x="285.2" y="514" font-size="13" fill="#000" text-anchor="end">-12</text>
<text x="349.2" y="514" font-size="13" fill="#000" text-anchor="end">-27</text>
<text x="413.2" y="514" font-size="13" fill="#000" text-anchor="end">-22</text>
<text x="477.2" y="514" font-size="13" fill="#000" text-anchor="end">46</text>
<text x="541.2" y="514" font-size="13" fill="#000" text-anchor="end">-39</text>
<text x="605.2" y="514" font-size="13" fill="#000" text-anchor="end">16</text>
<text x="18.8" y="533.8" font-size="12.5" fill="#444" text-anchor="middle">16</text>
<text x="93.2" y="534" font-size="13" fill="#000" text-anchor="end">-38</text>
<text x="157.2" y="534" font-size="13" fill="#000" text-anchor="end">-7</text>
<text x="221.2" y="534" font-size="13" fill="#000" text-anchor="end">30</text>
<text x="285.2" y="534" font-size="13" fill="#000" text-anchor="end">13</text>
<text x="349.2" y="534" font-size="13" fill="#000" text-anchor="end">31</text>
<text x="413.2" y="534" font-size="13" fill="#000" text-anchor="end">8</text>
<text x="477.2" y="534" font-size="13" fill="#000" text-anchor="end">50</text>
<text x="541.2" y="534" font-size="13" fill="#000" text-anchor="end">-38</text>
<text x="605.2" y="534" font-size="13" fill="#000" text-anchor="end">1</text>
<g filter="url(#psh)"><rect x="298" y="125" width="174" height="205" fill="#fff"/></g>
<rect x="298.5" y="125.5" width="173" height="204" fill="#fff" stroke="#c8c8c8" stroke-width="1"/>
<rect x="300" y="127" width="170" height="23" fill="#eeeeee"/>
<text x="308.2" y="143" font-size="12" fill="#666" textLength="77.5" lengthAdjust="spacingAndGlyphs" font-weight="bold">Theme Colors</text>
<rect x="302" y="152" width="13" height="13" fill="#e2e3e6"/>
<rect x="303" y="153" width="11" height="11" fill="#FFFFFF"/>
<rect x="302" y="170" width="13" height="64" fill="#e2e3e6"/>
<rect x="303" y="171.0" width="11" height="13.0" fill="#F2F2F2"/>
<rect x="303" y="183.4" width="11" height="13.0" fill="#D8D8D8"/>
<rect x="303" y="195.8" width="11" height="13.0" fill="#BFBFBF"/>
<rect x="303" y="208.2" width="11" height="13.0" fill="#A5A5A5"/>
<rect x="303" y="220.6" width="11" height="12.4" fill="#7F7F7F"/>
<rect x="302" y="263" width="13" height="13" fill="#e2e3e6"/>
<rect x="303" y="264" width="11" height="11" fill="#C00000"/>
<rect x="319" y="152" width="13" height="13" fill="#e2e3e6"/>
<rect x="320" y="153" width="11" height="11" fill="#000000"/>
<rect x="319" y="170" width="13" height="64" fill="#e2e3e6"/>
<rect x="320" y="171.0" width="11" height="13.0" fill="#7F7F7F"/>
<rect x="320" y="183.4" width="11" height="13.0" fill="#595959"/>
<rect x="320" y="195.8" width="11" height="13.0" fill="#3F3F3F"/>
<rect x="320" y="208.2" width="11" height="13.0" fill="#262626"/>
<rect x="320" y="220.6" width="11" height="12.4" fill="#0C0C0C"/>
<rect x="319" y="263" width="13" height="13" fill="#e2e3e6"/>
<rect x="320" y="264" width="11" height="11" fill="#FF0000"/>
<rect x="336" y="152" width="13" height="13" fill="#e2e3e6"/>
<rect x="337" y="153" width="11" height="11" fill="#EEECE1"/>
<rect x="336" y="170" width="13" height="64" fill="#e2e3e6"/>
<rect x="337" y="171.0" width="11" height="13.0" fill="#DDD9C3"/>
<rect x="337" y="183.4" width="11" height="13.0" fill="#C4BD97"/>
<rect x="337" y="195.8" width="11" height="13.0" fill="#938953"/>
<rect x="337" y="208.2" width="11" height="13.0" fill="#494429"/>
<rect x="337" y="220.6" width="11" height="12.4" fill="#1D1B10"/>
<rect x="336" y="263" width="13" height="13" fill="#e2e3e6"/>
<rect x="337" y="264" width="11" height="11" fill="#FFC000"/>
<rect x="353" y="152" width="13" height="13" fill="#e2e3e6"/>
<rect x="354" y="153" width="11" height="11" fill="#1F497D"/>
<rect x="353" y="170" width="13" height="64" fill="#e2e3e6"/>
<rect x="354" y="171.0" width="11" height="13.0" fill="#C6D9F0"/>
<rect x="354" y="183.4" width="11" height="13.0" fill="#8DB3E2"/>
<rect x="354" y="195.8" width="11" height="13.0" fill="#548DD4"/>
<rect x="354" y="208.2" width="11" height="13.0" fill="#17365D"/>
<rect x="354" y="220.6" width="11" height="12.4" fill="#0F243E"/>
<rect x="353" y="263" width="13" height="13" fill="#e2e3e6"/>
<rect x="354" y="264" width="11" height="11" fill="#FFFF00"/>
<rect x="370" y="152" width="13" height="13" fill="#e2e3e6"/>
<rect x="371" y="153" width="11" height="11" fill="#4F81BD"/>
<rect x="370" y="170" width="13" height="64" fill="#e2e3e6"/>
<rect x="371" y="171.0" width="11" height="13.0" fill="#DBE5F1"/>
<rect x="371" y="183.4" width="11" height="13.0" fill="#B8CCE4"/>
<rect x="371" y="195.8" width="11" height="13.0" fill="#95B3D7"/>
<rect x="371" y="208.2" width="11" height="13.0" fill="#366092"/>
<rect x="371" y="220.6" width="11" height="12.4" fill="#244061"/>
<rect x="370" y="263" width="13" height="13" fill="#e2e3e6"/>
<rect x="371" y="264" width="11" height="11" fill="#92D050"/>
<rect x="387" y="152" width="13" height="13" fill="#e2e3e6"/>
<rect x="388" y="153" width="11" height="11" fill="#C0504D"/>
<rect x="387" y="170" width="13" height="64" fill="#e2e3e6"/>
<rect x="388" y="171.0" width="11" height="13.0" fill="#F2DCDB"/>
<rect x="388" y="183.4" width="11" height="13.0" fill="#E5B9B7"/>
<rect x="388" y="195.8" width="11" height="13.0" fill="#D99694"/>
<rect x="388" y="208.2" width="11" height="13.0" fill="#953734"/>
<rect x="388" y="220.6" width="11" height="12.4" fill="#632423"/>
<rect x="387" y="263" width="13" height="13" fill="#e2e3e6"/>
<rect x="388" y="264" width="11" height="11" fill="#00B050"/>
<rect x="404" y="152" width="13" height="13" fill="#e2e3e6"/>
<rect x="405" y="153" width="11" height="11" fill="#9BBB59"/>
<rect x="404" y="170" width="13" height="64" fill="#e2e3e6"/>
<rect x="405" y="171.0" width="11" height="13.0" fill="#EBF1DD"/>
<rect x="405" y="183.4" width="11" height="13.0" fill="#D7E3BC"/>
<rect x="405" y="195.8" width="11" height="13.0" fill="#C3D69B"/>
<rect x="405" y="208.2" width="11" height="13.0" fill="#76923C"/>
<rect x="405" y="220.6" width="11" height="12.4" fill="#4F6128"/>
<rect x="404" y="263" width="13" height="13" fill="#e2e3e6"/>
<rect x="405" y="264" width="11" height="11" fill="#00B0F0"/>
<rect x="421" y="152" width="13" height="13" fill="#e2e3e6"/>
<rect x="422" y="153" width="11" height="11" fill="#8064A2"/>
<rect x="421" y="170" width="13" height="64" fill="#e2e3e6"/>
<rect x="422" y="171.0" width="11" height="13.0" fill="#E5E0EC"/>
<rect x="422" y="183.4" width="11" height="13.0" fill="#CCC1D9"/>
<rect x="422" y="195.8" width="11" height="13.0" fill="#B2A2C7"/>
<rect x="422" y="208.2" width="11" height="13.0" fill="#5F497A"/>
<rect x="422" y="220.6" width="11" height="12.4" fill="#3F3151"/>
<rect x="421" y="263" width="13" height="13" fill="#e2e3e6"/>
<rect x="422" y="264" width="11" height="11" fill="#0070C0"/>
<rect x="438" y="152" width="13" height="13" fill="#e2e3e6"/>
<rect x="439" y="153" width="11" height="11" fill="#4BACC6"/>
<rect x="438" y="170" width="13" height="64" fill="#e2e3e6"/>
<rect x="439" y="171.0" width="11" height="13.0" fill="#DBEEF3"/>
<rect x="439" y="183.4" width="11" height="13.0" fill="#B7DDE8"/>
<rect x="439" y="195.8" width="11" height="13.0" fill="#92CDDC"/>
<rect x="439" y="208.2" width="11" height="13.0" fill="#31859B"/>
<rect x="439" y="220.6" width="11" height="12.4" fill="#205867"/>
<rect x="438" y="263" width="13" height="13" fill="#e2e3e6"/>
<rect x="439" y="264" width="11" height="11" fill="#002060"/>
<rect x="455" y="152" width="13" height="13" fill="#e2e3e6"/>
<rect x="456" y="153" width="11" height="11" fill="#F79646"/>
<rect x="455" y="170" width="13" height="64" fill="#e2e3e6"/>
<rect x="456" y="171.0" width="11" height="13.0" fill="#FDEADA"/>
<rect x="456" y="183.4" width="11" height="13.0" fill="#FBD5B5"/>
<rect x="456" y="195.8" width="11" height="13.0" fill="#FAC08F"/>
<rect x="456" y="208.2" width="11" height="13.0" fill="#E36C09"/>
<rect x="456" y="220.6" width="11" height="12.4" fill="#974806"/>
<rect x="455" y="263" width="13" height="13" fill="#e2e3e6"/>
<rect x="456" y="264" width="11" height="11" fill="#7030A0"/>
<rect x="404.5" y="196.5" width="12" height="12" fill="none" stroke="#f29436" stroke-width="1.6"/>
<rect x="405.8" y="197.8" width="9.4" height="9.4" fill="#c3d69b" stroke="#fce8cf" stroke-width="0.8"/>
<rect x="300" y="239" width="170" height="22" fill="#eeeeee"/>
<text x="308.1" y="253.8" font-size="12" fill="#666" textLength="89" lengthAdjust="spacingAndGlyphs" font-weight="bold">Standard Colors</text>
<rect x="302.5" y="280.5" width="19" height="19" fill="#f1f7f3" stroke="#80c19a" stroke-width="1"/>
<rect x="304.5" y="282.5" width="15" height="15" fill="#e9f3ed" stroke="#dcdde2" stroke-width="1"/>
<text x="332.6" y="294.2" font-size="12" fill="#444" textLength="34" lengthAdjust="spacingAndGlyphs">No Fill</text>
<line x1="332.2" y1="295.5" x2="341.2" y2="295.5" stroke="#555" stroke-width="1"/>
<line x1="300" y1="302.5" x2="470" y2="302.5" stroke="#e1e1e1" stroke-width="1"/>
<path d="M311.5 315.3L311.50 307.80A7.5 7.5 0 0 1 318.63 312.98Z" fill="#e8c07d" stroke="#fff" stroke-width="0.8"/>
<path d="M311.5 315.3L318.63 312.98A7.5 7.5 0 0 1 315.91 321.37Z" fill="#6e9f83" stroke="#fff" stroke-width="0.8"/>
<path d="M311.5 315.3L315.91 321.37A7.5 7.5 0 0 1 307.09 321.37Z" fill="#4f81bd" stroke="#fff" stroke-width="0.8"/>
<path d="M311.5 315.3L307.09 321.37A7.5 7.5 0 0 1 304.37 312.98Z" fill="#d65a2d" stroke="#fff" stroke-width="0.8"/>
<path d="M311.5 315.3L304.37 312.98A7.5 7.5 0 0 1 311.50 307.80Z" fill="#e88b3a" stroke="#fff" stroke-width="0.8"/>
<text x="331.4" y="319.8" font-size="12" fill="#444" textLength="75.6" lengthAdjust="spacingAndGlyphs">More Colors...</text>
<line x1="331.4" y1="321.5" x2="342" y2="321.5" stroke="#555" stroke-width="1"/>
<g filter="url(#ash)"><path d="M307.7 45.6Q309.5 44.4 311.3 45.6L311.2 88.5Q314 85.2 318.4 83L309.4 100.2L300.3 83.9Q305 85.6 307.8 88.5Z" fill="#c60000" stroke="#a00000" stroke-width="0.6"/><path d="M309.5 47V86" stroke="#e03030" stroke-width="0.8" stroke-dasharray="1.5 3" opacity="0.7"/></g>
</g>
</svg>
</body></html>
